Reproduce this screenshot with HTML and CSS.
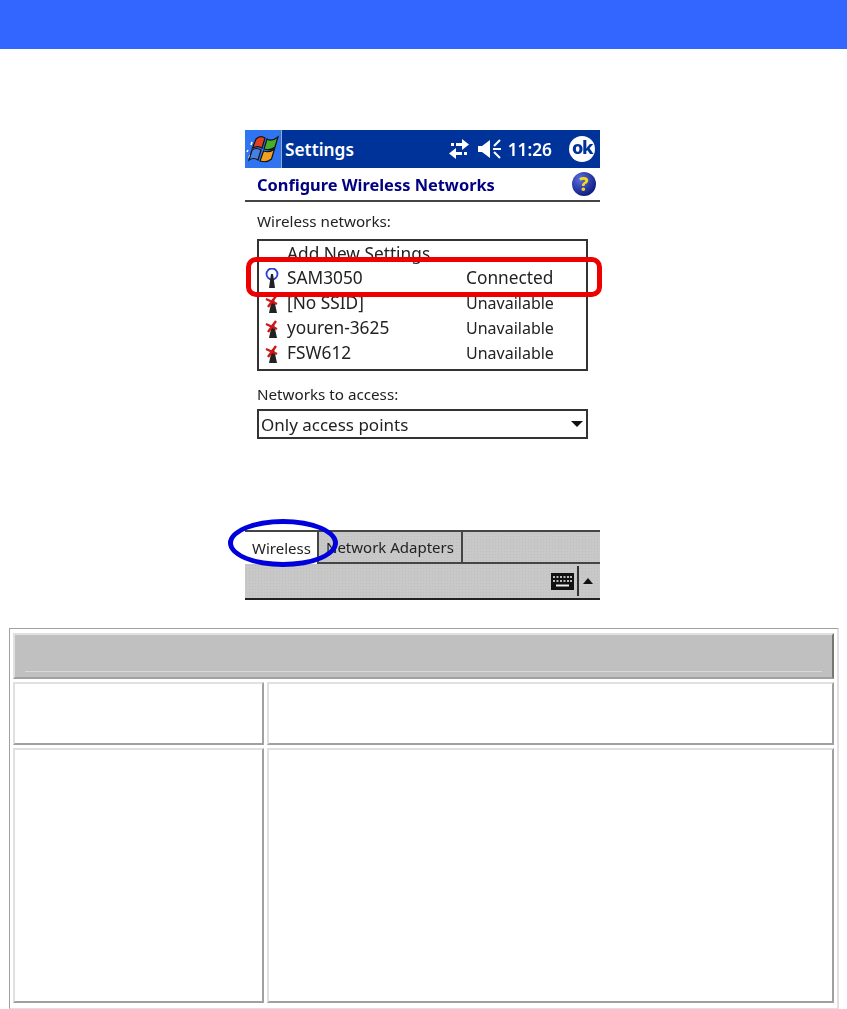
FILE: index.html
```html
<!DOCTYPE html>
<html lang="en">
<head>
    <meta charset="UTF-8">
    <title>Configure Wireless Networks</title>
    <link rel="stylesheet" href="styles.css">
</head>
<body>
<div class="top-bar"></div>

<div class="figure">
    <div class="device">
        <!-- Title bar -->
        <div class="nav-bar">
            <div class="start-tile">
                <svg width="34" height="28" viewBox="0 0 34 28">
                    <path d="M3 23l1-3M1 17l1-2M5 10l1-3" stroke="#fff" stroke-width="1.5" fill="none"/>
                    <path d="M10 4 C13 1 16 1 19 3 L16 13 C13 11 10 11 6.5 13 Z" fill="#e0401f" stroke="#111" stroke-width="1.2"/>
                    <path d="M21 4 C24 6 27 6 32 2 L29 12 C26 15 22 15 18 14 Z" fill="#46b02a" stroke="#111" stroke-width="1.2"/>
                    <path d="M6 15 C9 13 12 13 15 15 L12 25 C9 23 6 23 3 25 Z" fill="#4a7fe0" stroke="#111" stroke-width="1.2"/>
                    <path d="M17.500 16 C21 17 25 17 28.500 14 L25.500 24 C22 27 17 27 14 26 Z" fill="#eea020" stroke="#111" stroke-width="1.2"/>
                </svg>
            </div>
            <span class="nav-title">Settings</span>
            <span class="nav-icons">
                <svg width="22" height="20" viewBox="0 0 22 20">
                    <path d="M3 4h3v3H3zM8 4h6V0l7 5.500-7 5.500V7H8zM16 13h3v3h-3zM14 16H8v4l-7-5.500L8 9v4h6z" fill="#fff"/>
                </svg>
                <svg class="speaker" width="24" height="20" viewBox="0 0 24 20">
                    <path d="M0 7h4l8-6v18l-8-6H0z" fill="#fff"/>
                    <path d="M22 1l-6 6M15 10h8M16 13l6 6" stroke="#fff" stroke-width="2" fill="none"/>
                </svg>
                <span class="clock">11:26</span>
            </span>
            <span class="ok-button">ok</span>
        </div>

        <div class="page-title">
            <span>Configure Wireless Networks</span>
            <span class="help-icon">?</span>
        </div>

        <div class="form-body">
            <div class="field-label">Wireless networks:</div>
            <div class="network-list">
                <div class="network-row">
                    <span class="network-icon"></span>
                    <span class="network-name">Add New Settings...</span>
                </div>
                <div class="network-row">
                    <span class="network-icon">
                        <svg width="18" height="20" viewBox="0 0 18 20">
                            <circle cx="9" cy="6" r="5.500" fill="none" stroke="#2a3fd0" stroke-width="1.800"/>
                            <path d="M8 6h2l2 14H6z" fill="#222"/>
                        </svg>
                    </span>
                    <span class="network-name">SAM3050</span>
                    <span>Connected</span>
                </div>
                <div class="network-row">
                    <span class="network-icon">
                        <svg width="18" height="20" viewBox="0 0 18 20">
                            <path d="M9 6h2l3 14H6z" fill="#222"/>
                            <path d="M3 6l11 5M13 3L5 14" stroke="#d01818" stroke-width="2.400" fill="none"/>
                        </svg>
                    </span>
                    <span class="network-name">[No SSID]</span>
                    <span class="status-off">Unavailable</span>
                </div>
                <div class="network-row">
                    <span class="network-icon">
                        <svg width="18" height="20" viewBox="0 0 18 20">
                            <path d="M9 6h2l3 14H6z" fill="#222"/>
                            <path d="M3 6l11 5M13 3L5 14" stroke="#d01818" stroke-width="2.400" fill="none"/>
                        </svg>
                    </span>
                    <span class="network-name">youren-3625</span>
                    <span class="status-off">Unavailable</span>
                </div>
                <div class="network-row">
                    <span class="network-icon">
                        <svg width="18" height="20" viewBox="0 0 18 20">
                            <path d="M9 6h2l3 14H6z" fill="#222"/>
                            <path d="M3 6l11 5M13 3L5 14" stroke="#d01818" stroke-width="2.400" fill="none"/>
                        </svg>
                    </span>
                    <span class="network-name">FSW612</span>
                    <span class="status-off">Unavailable</span>
                </div>
            </div>

            <div class="field-label second">Networks to access:</div>
            <div class="select-box">
                <span>Only access points</span>
                <span class="select-arrow"></span>
            </div>
        </div>

        <!-- Tabs -->
        <div class="tab-bar">
            <div class="tab tab-active">Wireless</div>
            <div class="tab">Network Adapters</div>
        </div>
        <div class="input-bar">
            <svg width="23" height="17" viewBox="0 0 23 17">
                <rect width="23" height="17" fill="#111"/>
                <path d="M2 4h2M5.500 4h2M9 4h2M12.500 4h2M16 4h2M19 4h2M2 8h2M5.500 8h2M9 8h2M12.500 8h2M16 8h2M19 8h2" stroke="#bbb" stroke-width="2"/>
                <path d="M5 12.500h13" stroke="#eee" stroke-width="2"/>
            </svg>
            <span class="input-divider"></span>
            <span class="input-arrow"></span>
        </div>

        <!-- Annotations -->
        <div class="mark-red"></div>
        <div class="mark-blue"></div>
    </div>
</div>

<table class="info-table" cellspacing="0">
    <tr>
        <th colspan="2"><div class="head-rule"></div></th>
    </tr>
    <tr class="row-short">
        <td class="col-left"></td>
        <td></td>
    </tr>
    <tr class="row-tall">
        <td class="col-left"></td>
        <td></td>
    </tr>
</table>
</body>
</html>
```

FILE: styles.css
```css
body { margin: 0; background: #fff; font-family: "Noto Sans", sans-serif; color: #222; }
.top-bar { height: 49px; background: #3366ff; }

.figure { display: flex; justify-content: center; padding: 81px 2px 0 0; }
.device { position: relative; width: 355px; height: 470px; display: flex; flex-direction: column; font-size: 17.3px; filter: blur(0.4px); }

.nav-bar { display: flex; align-items: center; height: 38px; background: #003399; color: #fff; flex: none; }
.start-tile { width: 36px; height: 38px; margin-right: 2px; background: #2f74f0; border-right: 1px solid #9ab; display: flex; align-items: center; justify-content: center; }
.nav-title { font-weight: 600; font-size: 17.3px; margin-left: 1px; }
.nav-icons { margin-left: auto; display: flex; align-items: center; }
.speaker { margin-left: 8px; }
.clock { font-weight: 600; font-size: 17.3px; margin-left: 6px; }
.ok-button { width: 26px; height: 26px; margin: 0 5px 0 17px; border-radius: 50%; background: #fff; color: #003399; font-weight: 800; font-size: 18px; letter-spacing: -1.5px; line-height: 23px; text-align: center; }

.page-title { display: flex; align-items: center; justify-content: space-between; height: 32px; padding: 0 4px 0 12px; color: #000080; font-weight: 700; font-size: 16.4px; border-bottom: 2px solid #444; flex: none; }
.help-icon { width: 24px; height: 24px; border-radius: 50%; background: radial-gradient(circle at 35% 30%, #5a6fe0, #101c80 75%); color: #f4d820; font-weight: 800; font-size: 19px; line-height: 24px; text-align: center; }

.form-body { flex: 1; padding: 9px 12px 0; background: #fff; }
.field-label { height: 28px; line-height: 20px; font-size: 15.2px; }
.field-label.second { height: 25px; margin-top: 13px; }
.network-list { width: 331px; height: 132px; box-sizing: border-box; border: 2px solid #333; }
.network-row { display: flex; align-items: center; height: 25px; }
.network-row:first-child { height: 24px; }
.network-icon { width: 28px; height: 20px; padding-left: 4px; box-sizing: border-box; flex: none; }
.network-name { width: 179px; flex: none; }
.status-off { font-size: 16px; }
.select-box { display: flex; align-items: center; justify-content: space-between; width: 331px; height: 30px; box-sizing: border-box; border: 2px solid #333; padding: 0 3px 0 2px; font-size: 17px; }
.select-arrow { border: 6px solid transparent; border-top: 6px solid #111; border-bottom: 0; }

.tab-bar { display: flex; height: 34px; box-sizing: border-box; border-top: 2px solid #444; border-bottom: 2px solid #444; background: #c8c8c8 radial-gradient(#bebebe 0.6px, transparent 0.8px) 0 0 / 3px 3px; font-size: 15px; flex: none; }
.tab { display: flex; align-items: center; padding: 0 7px; border-right: 2px solid #444; }
.tab-active { width: 74px; box-sizing: border-box; margin-bottom: -2px; background: #fff; }
.input-bar { display: flex; align-items: center; justify-content: flex-end; height: 36px; box-sizing: border-box; background: #c8c8c8 radial-gradient(#bebebe 0.6px, transparent 0.8px) 0 0 / 3px 3px; border-bottom: 2px solid #222; padding-right: 7px; flex: none; }
.input-divider { width: 2px; height: 30px; background: #333; margin: 0 4px 0 3px; }
.input-arrow { border: 5px solid transparent; border-bottom: 6px solid #111; border-top: 0; }

.mark-red { position: absolute; left: 1px; top: 127px; width: 356px; height: 40px; box-sizing: border-box; border: 5px solid #ee0000; border-radius: 10px; }
.mark-blue { position: absolute; left: -17px; top: 389px; width: 110px; height: 48px; box-sizing: border-box; border: 5px solid #0000dd; border-radius: 50%; }

.info-table { margin: 28px 0 0 9px; width: 830px; box-sizing: border-box; border-collapse: separate; border-spacing: 3px; padding: 1px 0 2px; border: 1px solid #a0a0a0; border-right: 2px solid #e0e0e0; border-bottom-color: #e0e0e4; }
.info-table th, .info-table td { padding: 0; border: 2px solid #a0a0a0; border-top-color: #e0e0e4; border-left-color: #e0e0e4; }
.info-table th { height: 42px; background: #c0c0c0; vertical-align: bottom; border-right-color: #77776c; }
.head-rule { height: 1px; margin: 0 10px 5px; background: #d8d8d8; }
.col-left { width: 247px; }
.row-short td { height: 59px; }
.row-tall td { height: 251px; }
```
